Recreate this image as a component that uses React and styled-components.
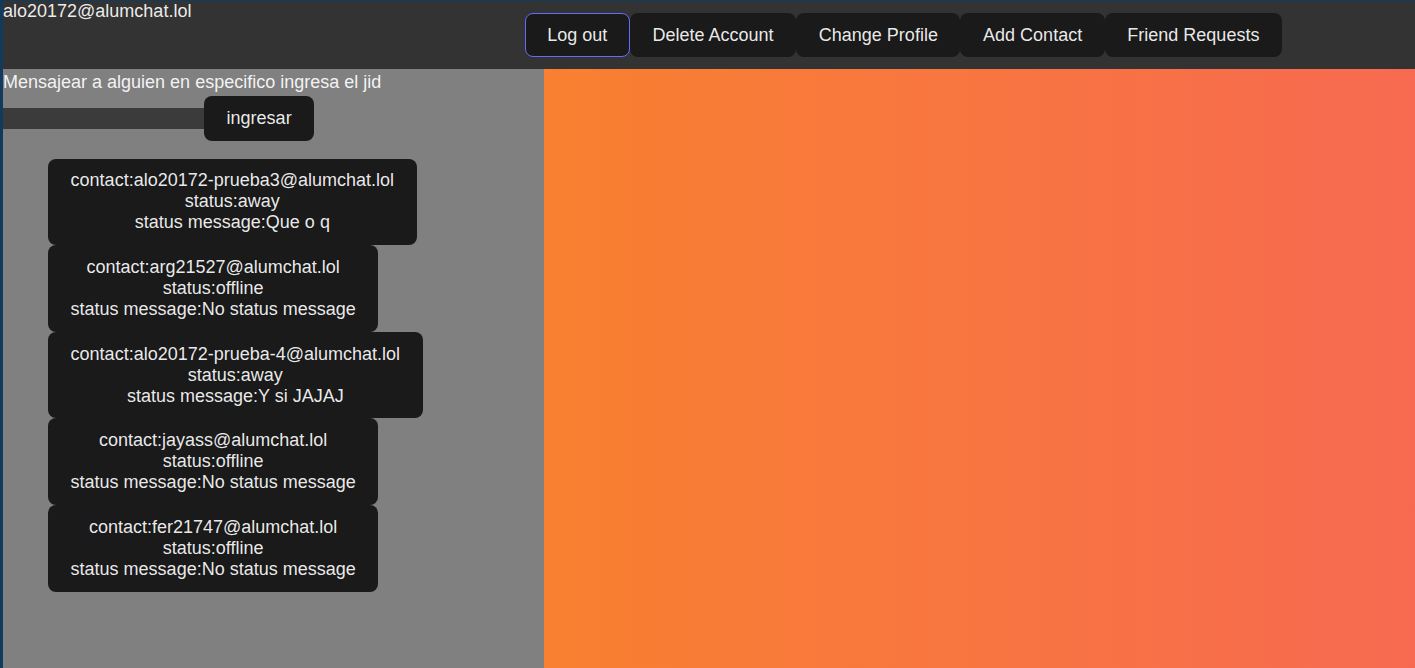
import React from "react";
import styled, { createGlobalStyle } from "styled-components";

const Global = createGlobalStyle`
  html, body { margin: 0; padding: 0; }
  body {
    background: #113a5c;
    font-family: "Liberation Sans", Arial, sans-serif;
    font-size: 18px;
    color: rgba(255,255,255,0.92);
    overflow: hidden;
  }
`;

const Page = styled.div`
  display: flex;
  flex-direction: column;
  height: 667px;
  padding: 1px 0 0 3px;
`;

const Header = styled.header`
  display: flex;
  align-items: center;
  height: 68px;
  background: #333333;
`;

const User = styled.div`
  align-self: flex-start;
  line-height: normal;
`;

const Nav = styled.nav`
  display: flex;
  margin-left: auto;
  margin-right: 133px;
`;

const Button = styled.button`
  font-family: inherit;
  font-size: 18px;
  line-height: normal;
  padding: 0.6em 1.2em;
  background: #1a1a1a;
  color: rgba(255,255,255,0.92);
  border: 1px solid ${(p) => (p.$focused ? "#646cff" : "transparent")};
  border-radius: 8px;
  cursor: pointer;
  text-align: center;
`;

const Main = styled.main`
  flex: 1;
  display: flex;
`;

const Side = styled.section`
  width: 541px;
  background: #808080;
  display: flex;
  flex-direction: column;
`;

const Hint = styled.div`
  line-height: 1.5;
`;

const Row = styled.div`
  display: flex;
  align-items: center;
`;

const Input = styled.input`
  width: 201px;
  height: 21px;
  box-sizing: border-box;
  border: none;
  background: #3b3b3b;
  color: #fff;
  padding: 0;
  margin: 0;
  outline: none;
`;

const List = styled.ul`
  list-style: none;
  margin: 18px 0 0;
  padding: 0 0 0 45px;
  display: flex;
  flex-direction: column;
  align-items: flex-start;
`;

const Card = styled(Button).attrs({ as: "li" })`
  display: block;
`;

const Canvas = styled.section`
  flex: 1;
  background: linear-gradient(90deg, #f98030, #f76a51);
`;

const contacts = [
  ["alo20172-prueba3@alumchat.lol", "away", "Que o q"],
  ["arg21527@alumchat.lol", "offline", "No status message"],
  ["alo20172-prueba-4@alumchat.lol", "away", "Y si JAJAJ"],
  ["jayass@alumchat.lol", "offline", "No status message"],
  ["fer21747@alumchat.lol", "offline", "No status message"],
];

export default function App() {
  return (
    <>
      <Global />
      <Page>
        <Header>
          <User>alo20172@alumchat.lol</User>
          <Nav>
            <Button $focused>Log out</Button>
            <Button>Delete Account</Button>
            <Button>Change Profile</Button>
            <Button>Add Contact</Button>
            <Button>Friend Requests</Button>
          </Nav>
        </Header>
        <Main>
          <Side>
            <Hint>Mensajear a alguien en especifico ingresa el jid</Hint>
            <Row>
              <Input />
              <Button>ingresar</Button>
            </Row>
            <List>
              {contacts.map(([jid, status, msg]) => (
                <Card key={jid}>
                  contact:{jid}
                  <br />
                  status:{status}
                  <br />
                  status message:{msg}
                </Card>
              ))}
            </List>
          </Side>
          <Canvas />
        </Main>
      </Page>
    </>
  );
}
